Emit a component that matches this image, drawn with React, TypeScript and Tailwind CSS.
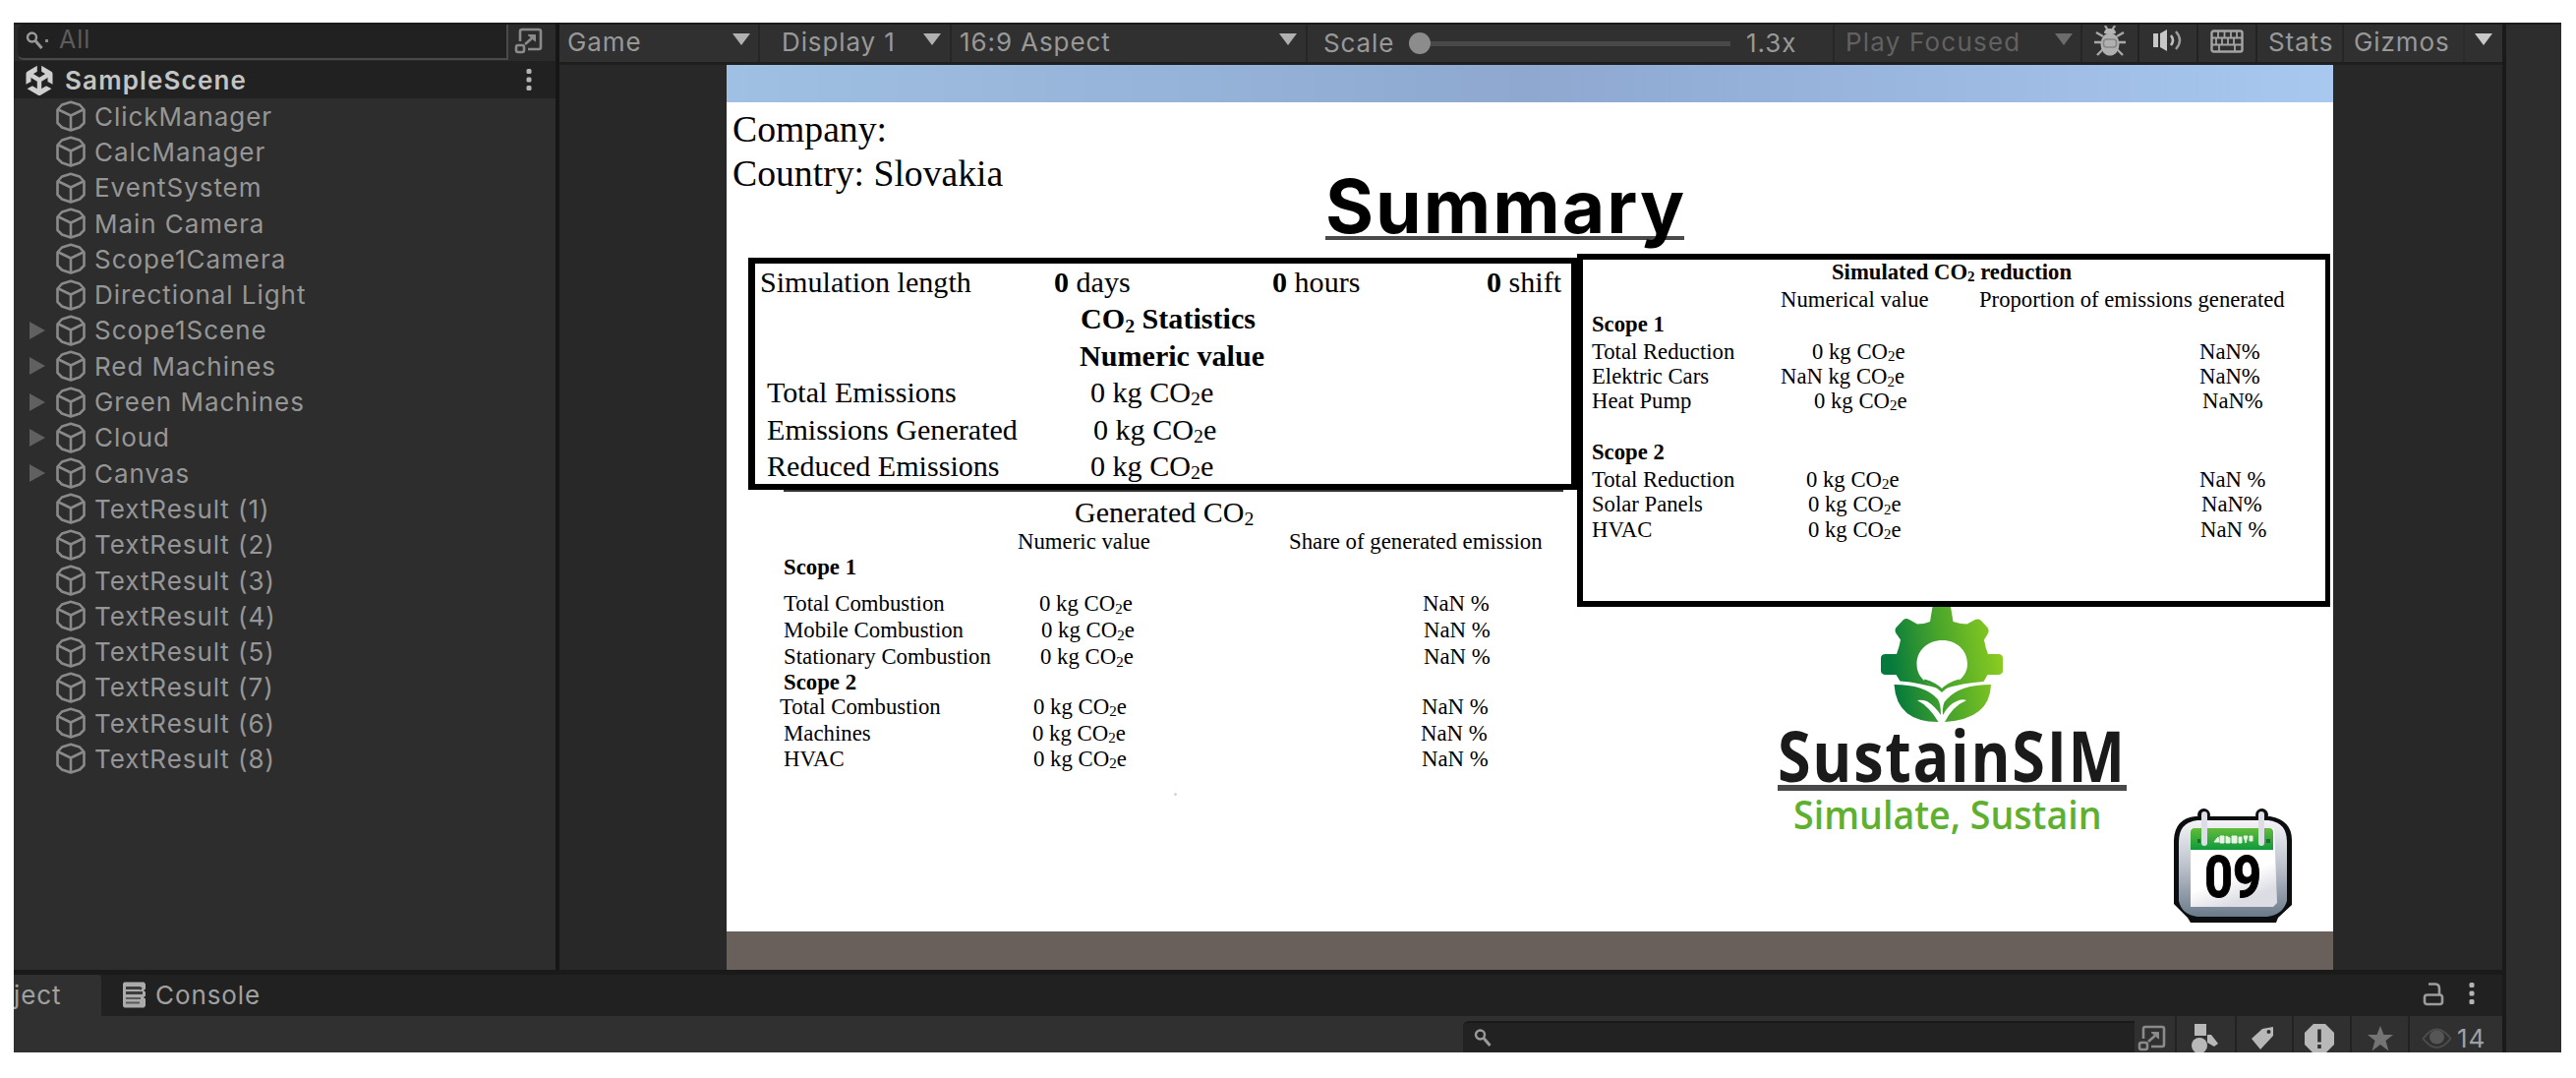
import React from 'react';
import clsx from 'clsx';

interface HierarchyItem {
    name: string;
    expandable?: boolean;
}

const hierarchy: HierarchyItem[] = [
    { name: 'ClickManager' },
    { name: 'CalcManager' },
    { name: 'EventSystem' },
    { name: 'Main Camera' },
    { name: 'Scope1Camera' },
    { name: 'Directional Light' },
    { name: 'Scope1Scene', expandable: true },
    { name: 'Red Machines', expandable: true },
    { name: 'Green Machines', expandable: true },
    { name: 'Cloud', expandable: true },
    { name: 'Canvas', expandable: true },
    { name: 'TextResult (1)' },
    { name: 'TextResult (2)' },
    { name: 'TextResult (3)' },
    { name: 'TextResult (4)' },
    { name: 'TextResult (5)' },
    { name: 'TextResult (7)' },
    { name: 'TextResult (6)' },
    { name: 'TextResult (8)' },
];

/* ---------- icons ---------- */

const CubeIcon = () => (
    <svg width="32" height="32" viewBox="0 0 32 32" fill="none" stroke="#8a8a8a" strokeWidth="2.6" strokeLinejoin="round">
        <path d="M16 1.800 25 4.500 29.500 9.500V23L25 27.500 16 30.500 7 27.500 2.500 23V9.500L7 4.500z" />
        <path d="M3.500 9.500 16 15.500 28.500 9.500M16 15.500V30" />
    </svg>
);

const UnityIcon = () => (
    <svg width="28" height="31" viewBox="0 0 28 31" fill="none">
        <path d="M14 2.500 25 9v13l-11 6.500L3 22V9z" stroke="#cfcfcf" strokeWidth="5" strokeLinejoin="round" />
        <path d="M14 15.500V28M14 15.500 5 10M14 15.500l9-5.500" stroke="#cfcfcf" strokeWidth="4.400" />
        <path d="M14 0v7.500M0 22.500l6.500-3.500M28 22.500l-6.500-3.500" stroke="#212121" strokeWidth="4.400" />
    </svg>
);

const PopoutIcon = () => (
    <svg width="30" height="27" viewBox="0 0 30 27" fill="none" stroke="#8a8a8a" strokeWidth="2.6">
        <path d="M6 14V4q0-2 2-2h17q2 0 2 2v16q0 2-2 2H14" />
        <rect x="2" y="18" width="8" height="7" rx="2" />
        <path d="M11 17l8-7" />
        <path d="M14 7.500h7.500V14z" fill="#8a8a8a" strokeWidth="1" />
    </svg>
);

const Arrow = ({ className }: { className: string }) => (
    <svg width="18" height="12" viewBox="0 0 18 12" className={className}>
        <path d="M0 0h18L9 12z" />
    </svg>
);

const Dots = ({ className }: { className?: string }) => (
    <svg width="6" height="24" viewBox="0 0 6 24" fill="#b4b4b4" className={className}>
        <rect x="0.5" y="1" width="5" height="5" rx="1.500" />
        <rect x="0.5" y="9.500" width="5" height="5" rx="1.500" />
        <rect x="0.5" y="18" width="5" height="5" rx="1.500" />
    </svg>
);

const SearchIcon = () => (
    <svg width="18" height="20" viewBox="0 0 18 20" fill="none" stroke="#9a9a9a" strokeWidth="2.4">
        <circle cx="6.500" cy="7" r="4.500" />
        <path d="M10 10.500 16.500 18" strokeWidth="3" />
    </svg>
);

const BugIcon = () => (
    <svg width="34" height="32" viewBox="0 0 34 32" fill="none">
        <path d="M17 9v20M3 7l7 4M31 7l-7 4M1 17h7M33 17h-7M4 30l6-6M30 30l-6-6M12 0l3 5M22 0l-3 5" stroke="#a8a8a8" strokeWidth="2.400" />
        <path d="M11 8q0-5 6-5t6 5z" fill="#b4b4b4" />
        <ellipse cx="17" cy="19" rx="9.500" ry="11.500" fill="#b0b0b0" />
        <rect x="10.500" y="14" width="13" height="8" rx="3" stroke="#858585" strokeWidth="1.600" />
    </svg>
);

const SpeakerIcon = () => (
    <svg width="30" height="22" viewBox="0 0 30 22" fill="none">
        <path d="M0 4h5v14H0zM7 4l7-4v22l-7-4z" fill="#c8c8c8" />
        <path d="M18 6q4 5 0 10" stroke="#c0c0c0" strokeWidth="2.600" />
        <path d="M23 2q8 9 0 18" stroke="#9c9c9c" strokeWidth="2.400" />
    </svg>
);

const KeyboardIcon = () => (
    <svg width="34" height="24" viewBox="0 0 34 24" fill="none" stroke="#a4a4a4">
        <rect x="1.500" y="1.500" width="31" height="21" rx="2" strokeWidth="2.400" />
        <path d="M2 8.500h30M2 15.500h30M8 2v7M14.500 2v7M21 2v7M27 2v7M6 9v6M12 9v6M18 9v6M24 9v6M9 16v6M25 16v6" strokeWidth="1.800" />
    </svg>
);

const ConsoleIcon = () => (
    <svg width="23" height="27" viewBox="0 0 23 27">
        <path d="M1.500.5h20l1.500 2v5l-2 1.500 2 1.500v4l-2 1.500 2 1.500v7l-1.500 2h-20L0 25V2z" fill="#ababab" />
        <path d="M3 6.500h14l2 1M3 11.500h17" stroke="#3c3c3c" strokeWidth="3" />
        <path d="M3 17h15M3 21.500h14" stroke="#5a5a5a" strokeWidth="2" />
    </svg>
);

const LockIcon = () => (
    <svg width="22" height="25" viewBox="0 0 22 25" fill="none" stroke="#9c9c9c" strokeWidth="2.600">
        <path d="M6 2.500h7q4 0 4 5V14" />
        <rect x="2" y="13.500" width="18" height="9.500" rx="2.500" />
    </svg>
);

const AssetTypeIcon = () => (
    <svg width="28" height="30" viewBox="0 0 28 30" fill="#b8b8b8">
        <rect x="4" y="0" width="12" height="12" />
        <path d="M17 11h4l7 9-4 3-7-4z" />
        <circle cx="9" cy="22" r="8" />
    </svg>
);

const TagIcon = () => (
    <svg width="25" height="25" viewBox="0 0 25 25">
        <path d="M1 13 12 3l11-2v9L10 24z" fill="#b8b8b8" />
        <circle cx="18.500" cy="6" r="2" fill="#303030" />
    </svg>
);

const WarnIcon = () => (
    <svg width="32" height="30" viewBox="0 0 32 30">
        <path d="M10 0h12l9 9v12l-9 9H10L1 21V9z" fill="#b8b8b8" />
        <path d="M16 5.500v13M16 21v4" stroke="#303030" strokeWidth="3.600" />
    </svg>
);

const StarIcon = () => (
    <svg width="26" height="26" viewBox="0 0 26 26" fill="#747474">
        <path d="M13 0l3.500 9H26l-7.500 6 3 10.500L13 19l-8.500 6.500 3-10.500L0 9h9.500z" />
    </svg>
);

const EyeIcon = () => (
    <svg width="31" height="22" viewBox="0 0 31 22" fill="none">
        <path d="M1.500 11Q15.500-8 29.500 11 15.500 29 1.500 11z" stroke="#4c4c4c" strokeWidth="2" />
        <ellipse cx="15.500" cy="9.500" rx="7.500" ry="7" fill="#565656" />
    </svg>
);

const SustainLogo = () => (
    <svg width="125" height="117" viewBox="0 0 125 117" className="ml-[105px]">
        <defs>
            <linearGradient id="leaf" x1="0" y1="60" x2="125" y2="40" gradientUnits="userSpaceOnUse">
                <stop offset="0.080" stopColor="#067a3c" />
                <stop offset="0.500" stopColor="#4aa52b" />
                <stop offset="1" stopColor="#8fcf1f" />
            </linearGradient>
        </defs>
        <path
            fill="url(#leaf)"
            fillRule="evenodd"
            d="M52.500 0h18.500l2.500 15q8 2.500 14 2.500L95 13.500q4-2 7 .5l6.500 7q2 3 .5 6l-4 6.500q1 7 4 14.500h11q4 .5 4 4v13q0 3-4 4h-11.500l-4 7Q84 77 62 84 40 77 19.500 75.500l-4-6.500H4q-4-1-4-4V52q0-3.500 4-4h12q3-8 4-14.500L15.500 27q-2-3 0-6l7-7.500q3-2.500 6.500-.5l8 4.500q7 0 13-2.500zM62.500 34C48 34 36.500 44 36.500 58c0 10 5 15 11 20q7 1 14.500 6 7-5 15-7c6-5 11-10 11-19C88 44 77 34 62.500 34z"
        />
        {/* bridge between the hole and the leaves */}
        <path fill="none" stroke="url(#leaf)" strokeWidth="3" d="M44 75q11 3 18 10 7-7 18-10" />
        <path
            fill="url(#leaf)"
            d="M13.500 79Q45 79 58 94q3 5 3 16-6-9-14-14-5-2-10-1 12 6 21.500 22Q16 117 13.500 79zM112 79Q80 79 67 94q-5 4-4 16 6-11 14-14 5-3 10-1-14 6-22 22 46-3 47-38z"
        />
    </svg>
);

const CalendarIcon = () => (
    <svg width="120" height="117" viewBox="0 0 120 117" className="mt-[205px] ml-[48px]">
        <defs>
            <linearGradient id="frame" x1="0" y1="0" x2="0" y2="1">
                <stop offset="0" stopColor="#f4f4f8" />
                <stop offset="0.500" stopColor="#b9bfc9" />
                <stop offset="1" stopColor="#6b7b8b" />
            </linearGradient>
            <linearGradient id="band" x1="0" y1="0" x2="0" y2="1">
                <stop offset="0" stopColor="#62bb3a" />
                <stop offset="1" stopColor="#0f9a3c" />
            </linearGradient>
            <linearGradient id="paper" x1="0" y1="0" x2="0.400" y2="1">
                <stop offset="0.700" stopColor="#ffffff" />
                <stop offset="1" stopColor="#dcdde4" />
            </linearGradient>
        </defs>
        <path d="M22 8h76q22 4 22 24v66l-14 13-2 5H17l-3-5L0 97V32Q1 10 22 8z" fill="#0c0d0f" />
        <circle cx="30.500" cy="6.500" r="6.500" fill="#0c0d0f" />
        <circle cx="89.500" cy="6.500" r="6.500" fill="#0c0d0f" />
        <path d="M24 12h72q19 2 19 22v60q-4 14-20 16H24Q8 108 5 94V34Q5 14 24 12z" fill="url(#frame)" />
        <path d="M17 20h85l3 76-4 4H17z" fill="url(#paper)" />
        <path d="M17 24q0-4 4-4h76q4 0 4 4v18H17z" fill="url(#band)" />
        <path d="M41 34l4-5 1 5zM47 28h4v7h-4zM53 28l4 2v5h-4zM59 28h5v7h-5zM66 29h3v6h-3zM71 28h4l-2 7zM77 28h3v5h-3z" fill="#e8f5e6" stroke="#e8f5e6" />
        <path d="M31 6v29M89 6v29" stroke="#dcdde6" strokeWidth="6" strokeLinecap="round" />
        <path d="M27 33h-3M94 33h4" stroke="#1d6b2e" strokeWidth="4" />
        <text x="31" y="90" textLength="58" lengthAdjust="spacingAndGlyphs" className="fill-black stroke-black stroke-1 font-[Roboto] text-[60px] font-bold">
            09
        </text>
    </svg>
);

/* ---------- game view pieces ---------- */

const Sub = () => <span className="relative top-[0.16em] text-[0.66em]">2</span>;

const KgCo2 = ({ value = '0' }: { value?: string }) => (
    <>
        {value} kg CO<Sub />e
    </>
);

const ScopeTitle = ({ className, label }: { className: string; label: string }) => (
    <div className={clsx('flex items-center font-bold', className)}>{label}</div>
);

const StatisticsBox = () => (
    <div className="h-[236px] w-[843px] border-[6px] border-l-[7px] border-black pt-px text-[30.100px] leading-[37.400px]">
        <div className="flex h-[37.400px] whitespace-pre pl-[5px]">
            <span className="w-[299px]">Simulation length</span>
            <span className="w-[222px]"><b>0</b> days</span>
            <span className="w-[218px]"><b>0</b> hours</span>
            <span><b>0</b> shift</span>
        </div>
        <div className="h-[37.400px] pl-[331px] font-bold">CO<Sub /> Statistics</div>
        <div className="h-[37.400px] pl-[330px] font-bold">Numeric value</div>
        <div className="flex h-[37.400px] pl-[12px]">
            <span className="w-[329px]">Total Emissions</span>
            <span><KgCo2 /></span>
        </div>
        <div className="flex h-[37.400px] pl-[12px]">
            <span className="w-[332px]">Emissions Generated</span>
            <span><KgCo2 /></span>
        </div>
        <div className="flex h-[37.400px] pl-[12px]">
            <span className="w-[329px]">Reduced Emissions</span>
            <span><KgCo2 /></span>
        </div>
    </div>
);

const generatedRows = [
    { label: 'Total Combustion', row: 'mt-[11px] h-[27px] pl-[36px]', kg: 'w-[260px]', pct: 'w-[390px]' },
    { label: 'Mobile Combustion', row: 'h-[27px] pl-[36px]', kg: 'w-[262px]', pct: 'w-[389px]' },
    { label: 'Stationary Combustion', row: 'h-[27px] pl-[36px]', kg: 'w-[261px]', pct: 'w-[390px]' },
    { label: 'Total Combustion', row: 'h-[26px] pl-[32px]', kg: 'w-[258px]', pct: 'w-[395px]' },
    { label: 'Machines', row: 'h-[28px] pl-[36px]', kg: 'w-[253px]', pct: 'w-[395px]' },
    { label: 'HVAC', row: 'h-[24px] pl-[36px]', kg: 'w-[254px]', pct: 'w-[395px]' },
];

const GeneratedTable = () => (
    <div className="w-[843px] text-[22.800px] leading-none">
        <div className="ml-[36px] h-[2px] w-[793px] bg-[#333]" />
        <div className="mt-[3px] flex h-[36px] items-center pl-[332px] text-[30px]">
            <span>Generated CO<Sub /></span>
        </div>
        <div className="flex h-[25px] items-center pl-[274px]">
            <span className="w-[276px]">Numeric value</span>
            <span>Share of generated emission</span>
        </div>
        <ScopeTitle className="h-[26px] pl-[36px]" label="Scope 1" />
        {generatedRows.map((r, idx) => (
            <React.Fragment key={idx}>
                {idx === 3 && <ScopeTitle className="h-[24px] pl-[36px]" label="Scope 2" />}
                <div className={clsx('flex items-center whitespace-pre', r.row)}>
                    <span className={r.kg}>{r.label}</span>
                    <span className={r.pct}><KgCo2 /></span>
                    <span>NaN %</span>
                </div>
            </React.Fragment>
        ))}
        <div className="mt-[22px] ml-[433px] size-[3px] rounded-full bg-[#d4d4d4]" />
    </div>
);

const reductionRows = [
    { label: 'Total Reduction', kg: '0', pct: 'NaN%', row: 'mt-[5px] h-[26px]', labelW: 'w-[224px]', kgW: 'w-[394px]' },
    { label: 'Elektric Cars', kg: 'NaN', pct: 'NaN%', row: 'h-[25px]', labelW: 'w-[192px]', kgW: 'w-[426px]' },
    { label: 'Heat Pump', kg: '0', pct: 'NaN%', row: 'h-[24px]', labelW: 'w-[226px]', kgW: 'w-[395px]' },
    { label: 'Total Reduction', kg: '0', pct: 'NaN %', row: 'mt-[3px] h-[26px]', labelW: 'w-[218px]', kgW: 'w-[400px]' },
    { label: 'Solar Panels', kg: '0', pct: 'NaN%', row: 'h-[25px]', labelW: 'w-[220px]', kgW: 'w-[400px]' },
    { label: 'HVAC', kg: '0', pct: 'NaN %', row: 'h-[26px]', labelW: 'w-[220px]', kgW: 'w-[399px]' },
];

const ReductionBox = () => (
    <div className="h-[359px] w-[766px] border-[6px] border-r-[5px] border-black text-[22.700px] leading-none">
        <div className="flex h-[26px] items-center pl-[253px] font-bold">
            <span>Simulated CO<Sub /> reduction</span>
        </div>
        <div className="flex h-[30px] items-center pl-[201px]">
            <span className="w-[202px]">Numerical value</span>
            <span>Proportion of emissions generated</span>
        </div>
        <ScopeTitle className="h-[20px] pl-[9px]" label="Scope 1" />
        {reductionRows.map((r, idx) => (
            <React.Fragment key={idx}>
                {idx === 3 && <ScopeTitle className="mt-[28px] h-[24px] pl-[9px]" label="Scope 2" />}
                <div className={clsx('flex items-center whitespace-pre pl-[9px]', r.row)}>
                    <span className={r.labelW}>{r.label}</span>
                    <span className={r.kgW}><KgCo2 value={r.kg} /></span>
                    <span>{r.pct}</span>
                </div>
            </React.Fragment>
        ))}
    </div>
);

const SummaryScreen = () => (
    <div className="h-[843px] bg-white font-['Liberation_Serif',serif] text-black">
        <div className="flex h-[154px]">
            <div className="w-[609px] pt-[5px] pl-[6px] text-[37.700px] leading-[45px]">
                <div>Company:</div>
                <div>Country: Slovakia</div>
            </div>
            <h1 className="mt-[73px] h-[67px] w-[365px] border-b-4 border-[#4a4a4a] font-[Inter,sans-serif] text-[75px] leading-[65px] font-bold tracking-[2px]">
                Summary
            </h1>
        </div>
        <div className="flex items-start">
            <div className="mt-1 ml-[22px]">
                <StatisticsBox />
                <GeneratedTable />
            </div>
            <div>
                <ReductionBox />
                <div className="flex">
                    <div className="ml-[204px] w-[355px] font-['Open_Sans',sans-serif] font-semibold whitespace-nowrap">
                        <SustainLogo />
                        <div className="h-[70px] border-b-[6px] border-[#484848] text-[71px] leading-[68px] text-[#1a1a1a]">
                            <span className="inline-block origin-left scale-x-[0.860] font-bold tracking-[2px]">SustainSIM</span>
                        </div>
                        <div className="pl-4 text-[40px] leading-[48px] text-[#5fb02f]">
                            <span className="inline-block origin-left scale-x-[0.940]">Simulate, Sustain</span>
                        </div>
                    </div>
                    <CalendarIcon />
                </div>
            </div>
        </div>
    </div>
);

/* ---------- editor panels ---------- */

const HierarchyPanel = () => (
    <div className="w-[551px] bg-[#2d2d2d]">
        <div className="flex h-[39px] border-t-2 border-[#1c1c1c] bg-[#2b2b2b]">
            <div className="ml-1 flex h-[36px] w-[499px] items-center rounded-l-md border-r-2 border-b-2 border-[#4a4a4a] bg-[#212121] pb-0.5 pl-2">
                <SearchIcon />
                <span className="ml-0.5 size-[3px] bg-[#8a8a8a]" />
                <span className="ml-[11px] text-[25px] tracking-[1px] text-[#5c5c5c]">All</span>
            </div>
            <div className="flex h-[36px] flex-1 items-center justify-center pr-1.5 pb-1">
                <PopoutIcon />
            </div>
        </div>
        <div className="flex h-[38px] items-center bg-[#212121] pl-[12px]">
            <UnityIcon />
            <span className="ml-[12px] text-[26px] font-semibold tracking-[1.150px] text-[#c4c4c4]">SampleScene</span>
            <Dots className="mr-[24px] ml-auto" />
        </div>
        {hierarchy.map((item) => (
            <div key={item.name} className="flex h-[36.300px] items-center">
                <span className="ml-4 w-[26px]">
                    {item.expandable && (
                        <svg width="16" height="18" viewBox="0 0 16 18" fill="#606060">
                            <path d="M0 0l16 9L0 18z" />
                        </svg>
                    )}
                </span>
                <CubeIcon />
                <span className="ml-[8px] text-[26px] tracking-[0.950px] text-[#969696]">{item.name}</span>
            </div>
        ))}
    </div>
);

const GameToolbar = () => (
    <div className="flex h-[40px] border-t-2 border-[#1c1c1c] bg-[#303030] text-[26px] leading-[36px] tracking-[0.900px] text-[#989898]">
        <div className="flex w-[204px] justify-between border-r-2 border-[#262626] pr-[8px] pl-[8px]">
            Game <Arrow className="mt-[9px] fill-[#b0b0b0]" />
        </div>
        <div className="flex w-[195px] justify-between border-r-2 border-[#262626] pr-[9px] pl-[22px]">
            Display 1 <Arrow className="mt-[9px] fill-[#b0b0b0]" />
        </div>
        <div className="flex w-[362px] justify-between border-r-2 border-[#262626] pr-[9px] pl-[8px]">
            16:9 Aspect <Arrow className="mt-[9px] fill-[#b0b0b0]" />
        </div>
        <div className="flex w-[536px] items-center border-r-2 border-[#262626] pl-[16px]">
            <span className="w-[87px]">Scale</span>
            <span className="size-[22px] rounded-full bg-[#8c8c8c]" />
            <span className="h-[5px] w-[305px] bg-[#484848]" />
            <span className="ml-[16px]">1.3x</span>
        </div>
        <div className="flex w-[252px] justify-between border-r-2 border-[#262626] pr-[8px] pl-[11px] tracking-[1.200px] text-[#616161]">
            Play Focused <Arrow className="mt-[9px] fill-[#6c6c6c]" />
        </div>
        <div className="flex w-[58px] items-center justify-center border-r-2 border-[#222] pb-1"><BugIcon /></div>
        <div className="flex w-[60px] items-center justify-center border-r-2 border-[#222] pb-1.5"><SpeakerIcon /></div>
        <div className="flex w-[60px] items-center justify-center border-r-2 border-[#222] pb-1"><KeyboardIcon /></div>
        <div className="w-[88px] border-r-2 border-[#262626] pl-[11px]">Stats</div>
        <div className="w-[123px] border-r-2 border-[#2b2b2b] pl-[10px]">Gizmos</div>
        <div className="flex flex-1 justify-center"><Arrow className="mt-[9px] fill-[#c8c8c8]" /></div>
    </div>
);

const GamePanel = () => (
    <div className="flex-1 bg-[#282828]">
        <GameToolbar />
        <div className="h-[3px] bg-[#1e1e1e]" />
        <div className="ml-[170px] w-[1634px]">
            <div className="h-[38px] bg-linear-to-r from-[#9fc0e2] via-[#8ea8d0] to-[#a8c8f0]" />
            <SummaryScreen />
            <div className="h-[39px] bg-[#69605b]" />
        </div>
    </div>
);

const BottomPanel = () => (
    <div className="h-[84px] border-t-[5px] border-[#1a1a1a] bg-[#303030] text-[26px] tracking-[0.900px] text-[#a0a0a0]">
        <div className="flex h-[42px] bg-[#212121]">
            <div className="flex w-[89px] items-center rounded-tr bg-[#303030]">
                <span className="pb-px">ject</span>
            </div>
            <div className="flex items-center pb-px pl-[22px]">
                <ConsoleIcon />
                <span className="ml-[10px]">Console</span>
            </div>
            <div className="mr-[28px] ml-auto flex items-center gap-[25px] pb-1">
                <LockIcon />
                <Dots />
            </div>
        </div>
        <div className="flex h-[37px] justify-end">
            <div className="mt-[5px] flex w-[683px] items-center rounded-tl-md border-t-2 border-[#1a1a1a] bg-[#222] pl-[11px]">
                <SearchIcon />
            </div>
            <div className="flex w-[43px] items-center border-r-2 border-[#222] pt-2 pl-[3px]"><PopoutIcon /></div>
            <div className="flex w-[61px] items-center border-r-2 border-[#222] pt-2 pl-[14px]"><AssetTypeIcon /></div>
            <div className="flex w-[58px] items-center border-r-2 border-[#222] pt-2 pl-[14px]"><TagIcon /></div>
            <div className="flex w-[59px] items-center border-r-2 border-[#222] pt-2 pl-[10px]"><WarnIcon /></div>
            <div className="flex w-[59px] items-center justify-center border-r-2 border-[#222] pt-2"><StarIcon /></div>
            <div className="flex w-[94px] items-center pt-2 pl-[12px]">
                <EyeIcon />
                <span className="ml-[5px] text-[26px] leading-[26px]">14</span>
            </div>
        </div>
    </div>
);

const App: React.FC = () => {
    return (
        <div className="h-[1096px] w-[2620px] bg-white pt-[23px] pl-[14px] font-[Inter,sans-serif]">
            <div className="flex h-[1047px] w-[2591px] overflow-hidden bg-[#2d2d2d]">
                <div className="w-[2531px]">
                    <div className="flex h-[963px]">
                        <HierarchyPanel />
                        <div className="w-[4px] bg-[#161616]" />
                        <GamePanel />
                    </div>
                    <BottomPanel />
                </div>
                <div className="w-[4px] bg-[#1a1a1a]" />
                <div className="flex-1 border-t-2 border-[#1c1c1c]" />
            </div>
        </div>
    );
};

export default App;
